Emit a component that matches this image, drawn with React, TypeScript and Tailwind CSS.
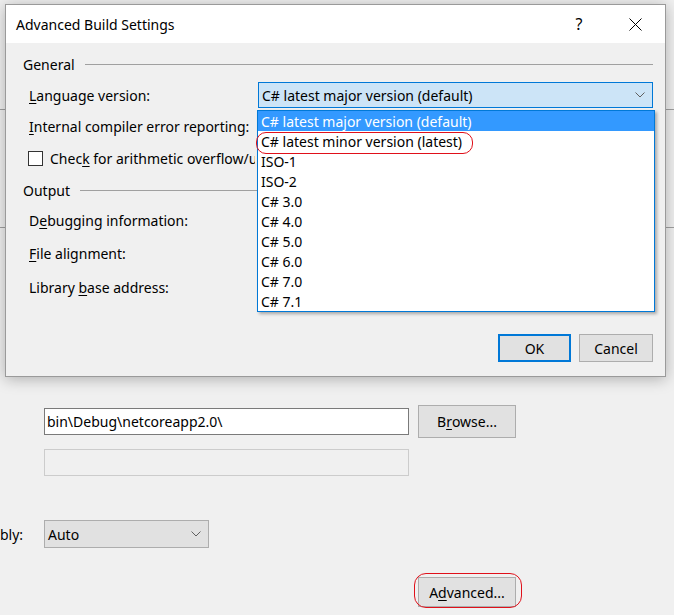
import React from "react";

const font = { fontFamily: '"Noto Sans", "Segoe UI", sans-serif' };

const languageVersions = [
  "C# latest major version (default)",
  "C# latest minor version (latest)",
  "ISO-1",
  "ISO-2",
  "C# 3.0",
  "C# 4.0",
  "C# 5.0",
  "C# 6.0",
  "C# 7.0",
  "C# 7.1",
];

const Chevron = ({ className = "" }: { className?: string }) => (
  <svg width="10" height="6" viewBox="0 0 10 6" className={className}>
    <path d="M0.5 0.5 L5 5 L9.5 0.5" fill="none" stroke="#606060" strokeWidth="1" />
  </svg>
);

const Key = ({ children }: { children: React.ReactNode }) => (
  <span className="underline underline-offset-2">{children}</span>
);

const GroupHeader = ({ title, className = "" }: { title: string; className?: string }) => (
  <div className={`flex h-[20px] items-center gap-[10px] ${className}`}>
    <span>{title}</span>
    <div className="h-px flex-1 bg-[#a0a0a0]" />
  </div>
);

const Field = ({ label, className = "" }: { label: React.ReactNode; className?: string }) => (
  <div className={`flex h-[26px] items-center pl-[6px] ${className}`}>
    <div className="w-[234px] shrink-0">{label}</div>
    <div className="h-full flex-1 border border-[#7a7a7a] bg-white" />
  </div>
);

function AdvancedBuildSettings() {
  return (
    <div className="absolute left-[5px] top-[4px] flex h-[373px] w-[661px] flex-col border border-[#9a9a9a] bg-[#f0f0f0] text-[14px] text-black shadow-[0_2px_14px_rgba(0,0,0,0.28)]">
      {/* title bar */}
      <div className="flex h-[38px] shrink-0 items-center bg-white pr-[2px]">
        <div className="flex-1 pl-[10px] text-[14px]">Advanced Build Settings</div>
        <div className="flex h-full w-[56px] items-center justify-center text-[16px]">?</div>
        <div className="flex h-full w-[56px] items-center justify-center">
          <svg width="13" height="13" viewBox="0 0 13 13">
            <path d="M0.5 0.5 L12.5 12.5 M12.5 0.5 L0.5 12.5" stroke="#000" strokeWidth="1" />
          </svg>
        </div>
      </div>

      {/* body */}
      <div className="flex flex-1 flex-col pl-[17px] pr-[12px] pt-[11px]">
        <GroupHeader title="General" />
        <div className="mt-[8px] flex h-[26px] items-center pl-[6px]">
          <div className="w-[229px] shrink-0">
            <Key>L</Key>anguage version:
          </div>
          <div className="flex h-full flex-1 items-center justify-between border border-[#0078d7] bg-[#cce4f7] pl-[3px] pr-[7px]">
            <span>C# latest major version (default)</span>
            <Chevron />
          </div>
        </div>
        <Field
          className="mt-[5px]"
          label={
            <>
              <Key>I</Key>nternal compiler error reporting:
            </>
          }
        />
        <div className="mt-[9px] flex h-[20px] items-center gap-[7px] pl-[5px]">
          <div className="h-[15px] w-[15px] shrink-0 border border-[#333] bg-white" />
          {/* the open list covers the rest of this caption */}
          <span className="w-[205px] overflow-hidden whitespace-nowrap">
            Chec<Key>k</Key> for arithmetic overflow/underflow
          </span>
        </div>
        <GroupHeader title="Output" className="mt-[12px]" />
        <Field
          className="mt-[7px]"
          label={
            <>
              D<Key>e</Key>bugging information:
            </>
          }
        />
        <Field
          className="mt-[7px]"
          label={
            <>
              <Key>F</Key>ile alignment:
            </>
          }
        />
        <Field
          className="mt-[8px]"
          label={
            <>
              Library <Key>b</Key>ase address:
            </>
          }
        />
        <div className="mt-auto flex justify-end gap-[8px] pb-[14px]">
          <button className="flex h-[28px] w-[73px] items-center justify-center border-2 border-[#0078d7] bg-[#e1e1e1]">
            OK
          </button>
          <button className="flex h-[28px] w-[74px] items-center justify-center border border-[#adadad] bg-[#e1e1e1]">
            Cancel
          </button>
        </div>
      </div>

      {/* open drop-down list */}
      <div className="absolute left-[251px] top-[105px] w-[398px] border border-[#0078d7] bg-white shadow-[2px_2px_3px_rgba(0,0,0,0.3)]">
        {languageVersions.map((v, i) => (
          <div
            key={v}
            className={`flex h-[20px] items-center whitespace-nowrap pl-[3px] ${
              i === 0 ? "bg-[#3399ff] text-white" : "text-black"
            }`}
          >
            {v}
          </div>
        ))}
      </div>
    </div>
  );
}

export default function App() {
  return (
    <div
      className="relative h-[615px] w-[674px] overflow-hidden bg-[#f0f0f0] text-[14px] text-black"
      style={font}
    >
      {/* project properties page behind the dialog */}
      <div className="flex flex-col pt-[109px]">
        <div className="h-px bg-[#a0a0a0]" />
        <div className="mt-[117px] h-px bg-[#a0a0a0]" />
        <div className="mt-[177px] flex h-[33px] items-center pl-[44px]">
          <div className="flex h-[27px] w-[365px] items-center border border-[#7a7a7a] bg-white pl-[2px]">
            bin\Debug\netcoreapp2.0\
          </div>
          <button className="ml-[9px] flex h-[33px] w-[98px] items-center justify-center border border-[#adadad] bg-[#e1e1e1]">
            B<Key>r</Key>owse...
          </button>
        </div>
        <div className="ml-[44px] mt-[11px] h-[27px] w-[365px] border border-[#cccccc] bg-[#f0f0f0]" />
        <div className="mt-[44px] flex h-[28px] items-center">
          <div className="w-[44px] shrink-0">bly:</div>
          <div className="flex h-full w-[165px] items-center justify-between border border-[#adadad] bg-[#e1e1e1] pl-[3px] pr-[7px]">
            <span>Auto</span>
            <Chevron />
          </div>
        </div>
        <button className="ml-[418px] mt-[29px] flex h-[30px] w-[98px] items-center justify-center border border-[#adadad] bg-[#e1e1e1]">
          A<Key>d</Key>vanced...
        </button>
      </div>

      <AdvancedBuildSettings />

      {/* red hand-drawn highlights */}
      <div className="absolute left-[256px] top-[132px] h-[22px] w-[217px] rounded-[10px] border border-[#e0101a]" />
      <div className="absolute left-[414px] top-[573px] h-[35px] w-[108px] rounded-[12px] border border-[#e0101a]" />
    </div>
  );
}
